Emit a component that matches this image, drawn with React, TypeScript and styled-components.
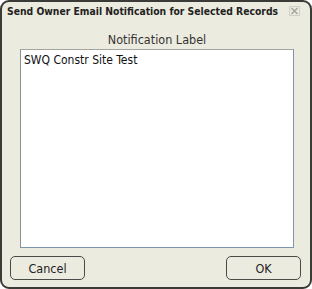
import { createGlobalStyle, styled } from "styled-components";

const GlobalStyle = createGlobalStyle`
  html, body {
    margin: 0;
    padding: 0;
    background: #ffffff;
    font-family: "DejaVu Sans Condensed", "DejaVu Sans", sans-serif;
  }
`;

const App = () => {
  return (
    <>
      <GlobalStyle />
      <Dialog>
        <TitleBar>
          <Title>Send Owner Email Notification for Selected Records</Title>
          <CloseButton aria-label="close">
            <svg width="11" height="10" viewBox="0 0 11 10">
              <rect x="0.5" y="0.5" width="10" height="9" fill="none" stroke="#d0d0c8" />
              <path d="M2.5 2 L8.5 8 M8.5 2 L2.5 8" stroke="#a8a8a0" strokeWidth="1.6" />
            </svg>
          </CloseButton>
        </TitleBar>
        <Body>
          <FieldLabel>Notification Label</FieldLabel>
          <TextBox defaultValue="SWQ Constr Site Test" />
        </Body>
        <Footer>
          <Button>Cancel</Button>
          <Button>OK</Button>
        </Footer>
      </Dialog>
    </>
  );
};

const Dialog = styled.div`
  box-sizing: border-box;
  width: 312px;
  height: 289px;
  background-color: #ecebdf;
  border: 2px solid #3a3a36;
  border-radius: 9px;
  display: flex;
  flex-direction: column;
  overflow: hidden;
`;

const TitleBar = styled.div`
  display: flex;
  align-items: center;
  height: 18px;
  padding: 0 0 0 5px;
`;

const Title = styled.div`
  flex: 1;
  font-weight: bold;
  font-size: 10.3px;
  color: #222;
  white-space: nowrap;
`;

const CloseButton = styled.div`
  display: flex;
  align-items: center;
  width: 21px;
`;

const Body = styled.div`
  flex: 1;
  display: flex;
  flex-direction: column;
  align-items: center;
  padding: 12px 16px 0 18px;
`;

const FieldLabel = styled.div`
  font-size: 12.5px;
  color: #333;
  line-height: 15px;
  margin-bottom: 2px;
`;

const TextBox = styled.textarea`
  box-sizing: border-box;
  width: 274px;
  height: 199px;
  resize: none;
  margin: 0;
  padding: 3px 3px;
  border: 1px solid #7f95ab;
  border-top-color: #a5a5a0;
  border-left-color: #8a8f94;
  background: #fff;
  font-family: "DejaVu Sans Condensed", "DejaVu Sans", sans-serif;
  font-size: 12px;
  color: #111;
  outline: none;
`;

const Footer = styled.div`
  display: flex;
  justify-content: space-between;
  padding: 0 9px 7px 8px;
`;

const Button = styled.button`
  box-sizing: border-box;
  width: 75px;
  height: 24px;
  border: 1px solid #4a4a46;
  border-radius: 5px;
  background: #ecebdf;
  font-family: "DejaVu Sans Condensed", "DejaVu Sans", sans-serif;
  font-size: 12.5px;
  color: #222;
  padding: 0;
`;

export default App;
